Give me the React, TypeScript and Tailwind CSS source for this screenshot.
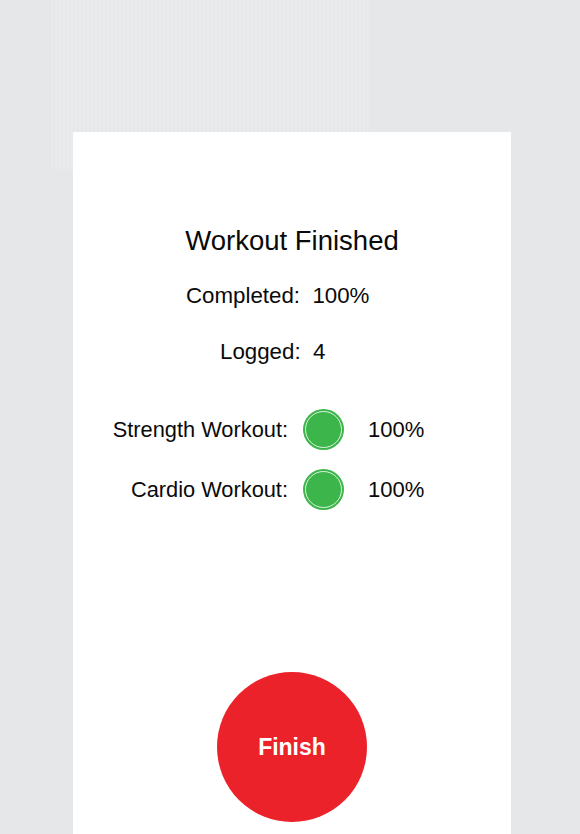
export default function App() {
  const rows = [
    { label: "Strength Workout:", value: "100%" },
    { label: "Cardio Workout:", value: "100%" },
  ];

  return (
    <div className="relative h-[834px] w-[580px] overflow-hidden bg-[#e6e7e9] font-['Liberation_Sans',Arial,sans-serif] text-[#0a0a0a]">
      {/* faint striped backdrop behind the card */}
      <div className="absolute left-[51px] top-0 h-[170px] w-[319px] bg-[repeating-linear-gradient(90deg,#e9eaec_0px,#e9eaec_2px,#e6e7e9_2px,#e6e7e9_4px)]" />

      <div className="relative ml-[73px] mt-[132px] flex h-[702px] w-[438px] flex-col bg-white pt-[93px]">
        <h1 className="text-center text-[27.5px] leading-[32px]">Workout Finished</h1>

        <p className="mt-[26px] whitespace-pre pl-[113px] text-[22.3px] leading-[26px]">
          {"Completed:  100%"}
        </p>
        <p className="mt-[30px] whitespace-pre pl-[147px] text-[22.3px] leading-[26px]">
          {"Logged:  4"}
        </p>

        <div className="mt-[44px] flex flex-col gap-[19px]">
          {rows.map((r) => (
            <div key={r.label} className="flex items-center">
              <span className="w-[215px] text-right text-[21.8px] leading-[26px]">{r.label}</span>
              <div className="ml-[15px] h-[41px] w-[41px] rounded-full bg-[#3cb64b] p-[2px]">
                <div className="h-full w-full rounded-full border border-white/80" />
              </div>
              <span className="ml-[24px] text-[22px] leading-[26px]">{r.value}</span>
            </div>
          ))}
        </div>

        <button className="mx-auto mt-[162px] flex h-[150px] w-[150px] items-center justify-center rounded-full bg-[#ec222b] text-[23px] font-bold text-white">
          Finish
        </button>
      </div>
    </div>
  );
}
